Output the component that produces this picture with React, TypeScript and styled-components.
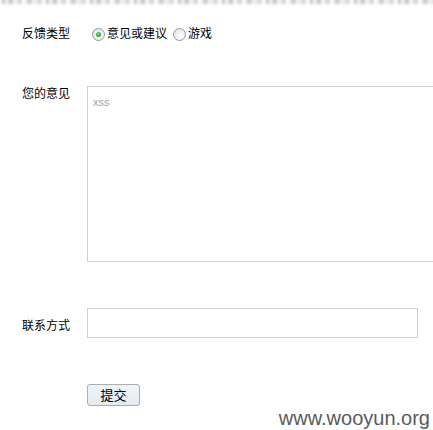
import React from "react";
import styled, { createGlobalStyle } from "styled-components";

const Global = createGlobalStyle`
  html, body {
    margin: 0;
    padding: 0;
    background: #ffffff;
    overflow: hidden;
  }
  body {
    font-family: "Noto Sans CJK SC", "Liberation Sans", sans-serif;
    color: #000;
  }
`;

const Page = styled.div`
  position: relative;
  width: 433px;
  height: 430px;
  overflow: hidden;
`;

const TopStrip = styled.div`
  height: 6px;
  background:
    linear-gradient(to bottom, rgba(255,255,255,0) 0%, rgba(255,255,255,0.2) 50%, #ffffff 100%),
    repeating-linear-gradient(
      90deg,
      #ffffff 0px,
      #c9ced2 3px,
      #e9ecee 7px,
      #bfc4c9 11px,
      #f4f5f6 15px,
      #cdd1d5 20px,
      #ffffff 24px,
      #c4c9cd 29px,
      #eef0f1 34px,
      #d2d6d9 40px,
      #ffffff 44px
    );
`;

const Form = styled.form`
  display: flex;
  flex-direction: column;
  padding-left: 22px;
  padding-top: 18px;
`;

const Row = styled.div<{ $mt?: number; $align?: string }>`
  display: grid;
  grid-template-columns: 65px 1fr;
  align-items: ${(p) => p.$align || "start"};
  margin-top: ${(p) => p.$mt || 0}px;
`;

const Label = styled.label<{ $pt?: number; $lh?: number }>`
  font-size: 12px;
  line-height: ${(p) => p.$lh || 14}px;
  padding-top: ${(p) => p.$pt || 0}px;
  white-space: nowrap;
`;

const RadioGroup = styled.div`
  display: flex;
  align-items: flex-start;
  height: 17px;
  padding-left: 5px;
`;

const RadioCircle = styled.span<{ $checked?: boolean }>`
  position: relative;
  box-sizing: border-box;
  width: 13px;
  height: 13px;
  margin-top: 4px;
  border-radius: 50%;
  border: 1px solid #8a9aa8;
  background: radial-gradient(circle at 65% 70%, #ffffff 0%, #e6e9ec 70%, #cfd5da 100%);
  flex: none;
  &::after {
    content: "";
    display: ${(p) => (p.$checked ? "block" : "none")};
    position: absolute;
    left: 3px;
    top: 3px;
    width: 5px;
    height: 5px;
    border-radius: 50%;
    background: radial-gradient(circle at 40% 35%, #7fe07a 0%, #2fa52b 60%, #1d7d1a 100%);
  }
`;

const RadioText = styled.span<{ $gap?: number }>`
  font-size: 12px;
  line-height: 17px;
  margin-left: 2px;
  margin-right: ${(p) => p.$gap || 0}px;
  white-space: nowrap;
`;

const TextArea = styled.textarea`
  box-sizing: border-box;
  width: 360px;
  height: 176px;
  margin: 0;
  padding: 8px 5px;
  border: 1px solid #d0d0d0;
  font-family: "Liberation Sans", sans-serif;
  font-size: 11px;
  line-height: 14px;
  color: #a0a0a0;
  resize: none;
  outline: none;
`;

const TextInput = styled.input`
  box-sizing: border-box;
  width: 331px;
  height: 30px;
  margin: 0;
  padding: 0 5px;
  border: 1px solid #d0d0d0;
  outline: none;
`;

const Button = styled.button`
  grid-column: 2;
  box-sizing: border-box;
  width: 53px;
  height: 22px;
  margin: 0;
  padding: 0;
  border: 1px solid #a9aeb3;
  border-radius: 3px;
  background: linear-gradient(to bottom, #f1f4f7 0%, #e4eaf0 100%);
  font-family: "Noto Sans CJK SC", sans-serif;
  font-size: 13px;
  line-height: 20px;
  color: #000;
`;

const Watermark = styled.div`
  position: absolute;
  right: 3px;
  top: 407px;
  font-family: "Liberation Sans", Arial, sans-serif;
  font-size: 20px;
  line-height: 23px;
  color: #5a5a5a;
`;

export default function App() {
  return (
    <Page>
      <Global />
      <TopStrip />
      <Form onSubmit={(e) => e.preventDefault()}>
        <Row>
          <Label $lh={17}>反馈类型</Label>
          <RadioGroup>
            <RadioCircle $checked />
            <RadioText $gap={6}>意见或建议</RadioText>
            <RadioCircle />
            <RadioText>游戏</RadioText>
          </RadioGroup>
        </Row>
        <Row $mt={45}>
          <Label>您的意见</Label>
          <TextArea defaultValue="xss" />
        </Row>
        <Row $mt={46} $align="center">
          <Label $pt={4}>联系方式</Label>
          <TextInput type="text" />
        </Row>
        <Row $mt={46}>
          <Button type="submit">提交</Button>
        </Row>
      </Form>
      <Watermark>www.wooyun.org</Watermark>
    </Page>
  );
}
